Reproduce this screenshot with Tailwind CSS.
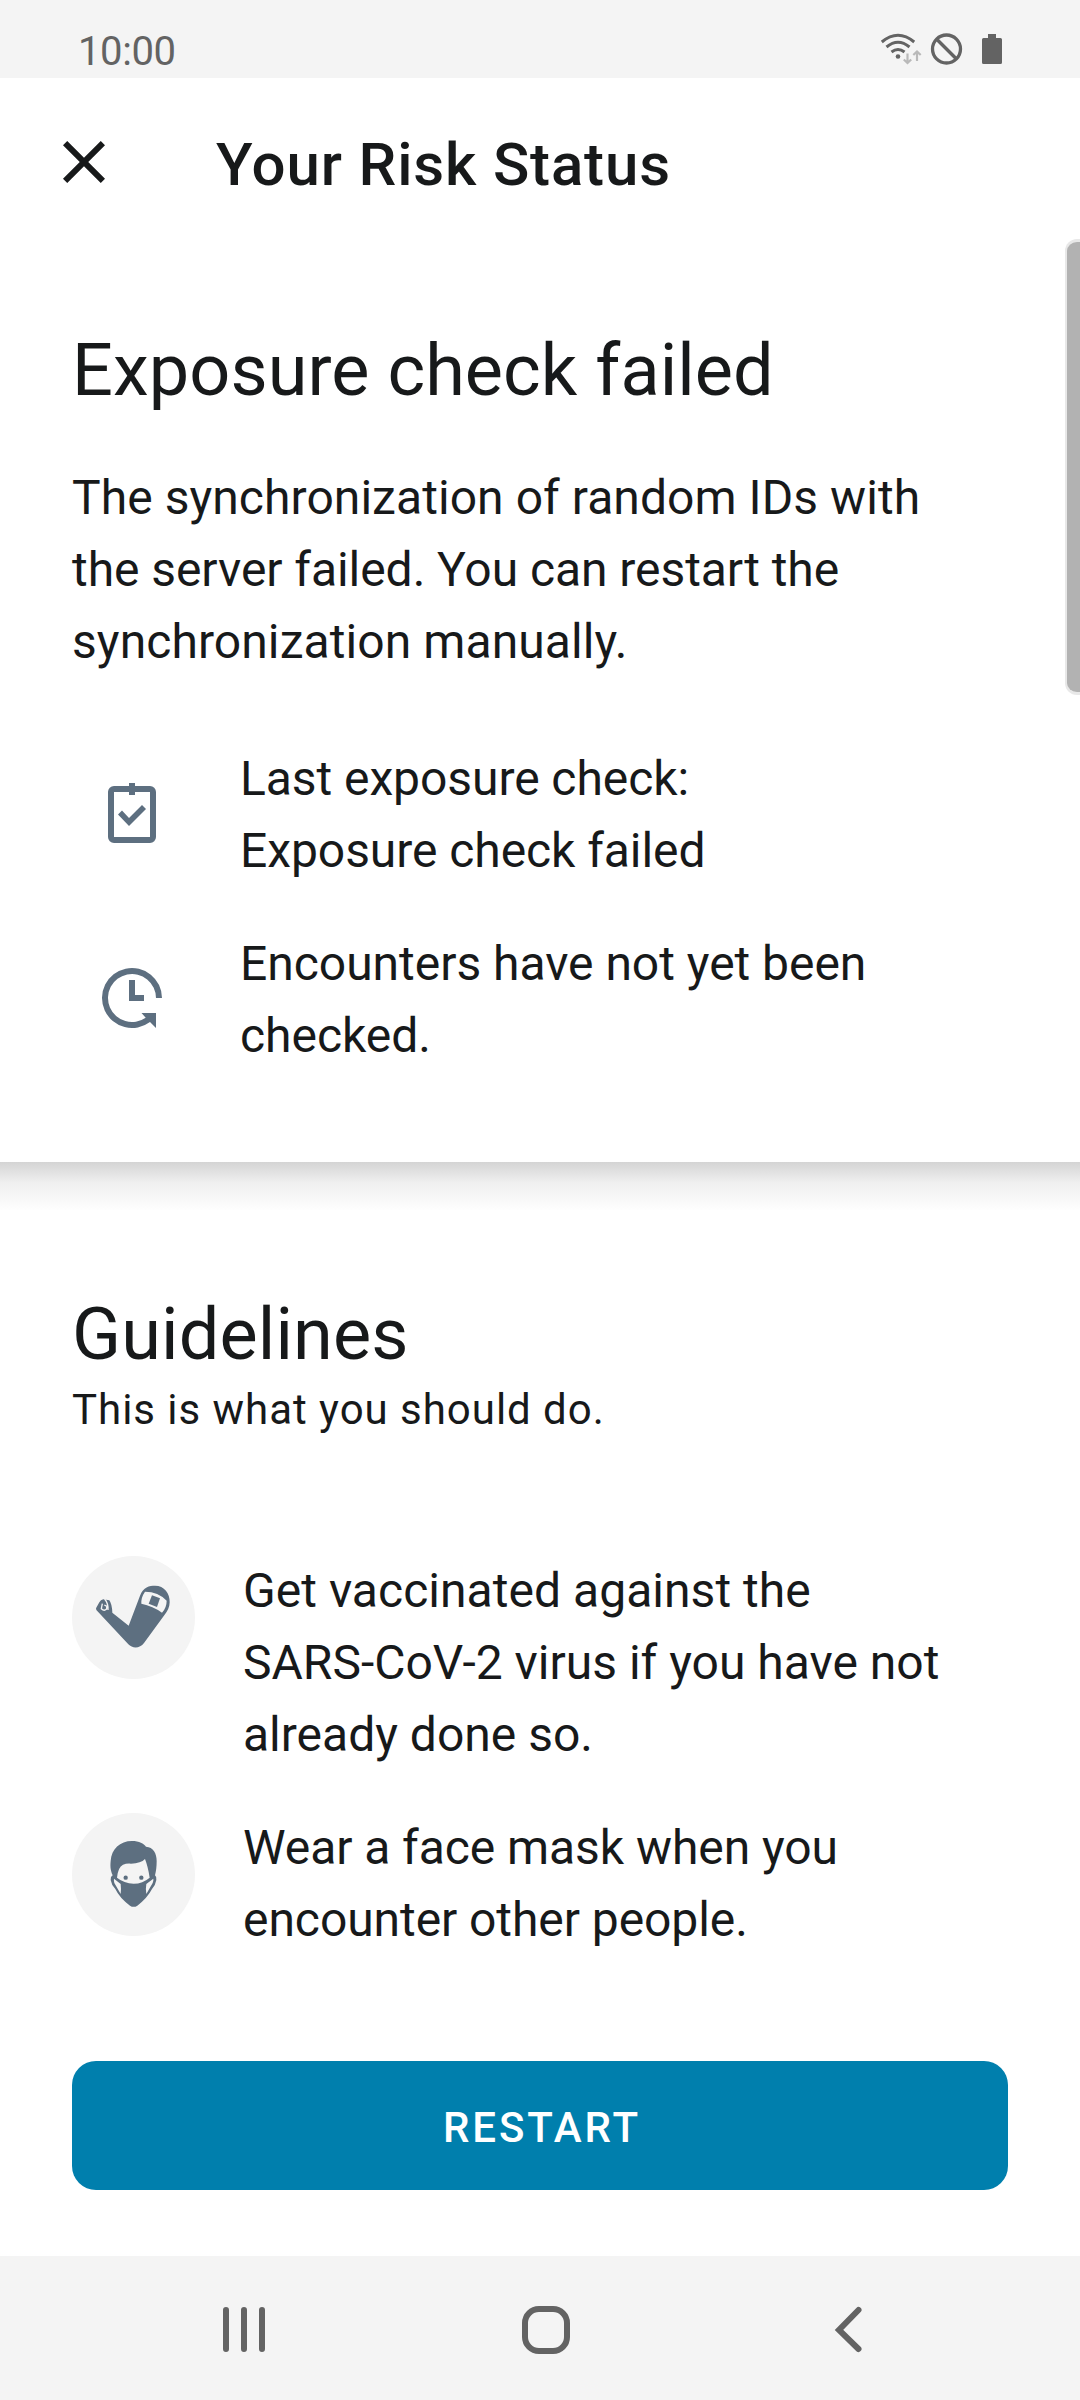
<!DOCTYPE html>
<html lang="en">
<head>
<meta charset="utf-8">
<title>Your Risk Status</title>
<script src="https://cdn.jsdelivr.net/npm/@tailwindcss/browser@4"></script>
</head>
<body class="h-[2400px] w-[1080px] overflow-hidden bg-white font-['Roboto',sans-serif] text-[48px] leading-[72px] text-[#17191a]">
<div class="relative flex h-full flex-col">
  <!-- Status bar -->
  <div class="flex h-[78px] shrink-0 items-start justify-between bg-[#f4f4f4] pr-[76px] pl-[78px]">
    <span class="mt-[28px] text-[40px] leading-[48px] tracking-[-0.4px] text-[#636363]">10:00</span>
    <svg class="mt-[30px] h-[36px] w-[124px]" viewBox="880 30 124 36" fill="none" stroke="#636363">
      <path d="M881.800 42Q898 28.500 914.200 42M886.500 47Q898 37.500 909.500 47M891.500 52Q898 47 904.500 52" stroke-width="3"/>
      <circle cx="898" cy="56.500" r="2.300" fill="#636363" stroke="none"/>
      <path d="M907.500 53.500v9M903.800 59.500l3.700 3.500 3.700-3.500M917 61v-9M913.300 55l3.700-3.500 3.700 3.500" stroke="#b9b9b9" stroke-width="2.200"/>
      <circle cx="946.500" cy="49" r="14" stroke-width="3.300"/>
      <path d="M936.500 39l20 20" stroke-width="3.300"/>
      <path d="M988 34h8v4h4.500a1.500 1.500 0 0 1 1.500 1.500v23a1.500 1.500 0 0 1-1.500 1.500h-17a1.500 1.500 0 0 1-1.500-1.500v-23a1.500 1.500 0 0 1 1.500-1.500h4.500z" fill="#636363" stroke="none"/>
    </svg>
  </div>

  <!-- Exposure check -->
  <section class="h-[1084px] shrink-0 px-[72px]">
    <header class="-ml-[24px] flex h-[168px] items-center">
      <svg class="size-[72px]" viewBox="0 0 24 24" fill="#17191a"><path d="M19 6.410L17.590 5 12 10.590 6.410 5 5 6.410 10.590 12 5 17.590 6.410 19 12 13.410 17.590 19 19 17.590 13.410 12z"/></svg>
      <h1 class="mt-[6px] ml-[96px] text-[60px] font-medium tracking-[0.85px]">Your Risk Status</h1>
    </header>
    <h2 class="mt-[77px] text-[72px] leading-[96px] tracking-[0.07px]">Exposure check failed</h2>
    <p class="mt-[43px]"><span class="tracking-[0.06px]">The synchronization of random IDs with</span><br><span class="tracking-[-0.06px]">the server failed. You can restart the</span><br><span class="tracking-[0.08px]">synchronization manually.</span></p>
    <div class="mt-[65px] flex items-center">
      <svg class="mt-[2px] ml-[24px] size-[72px]" viewBox="0 0 72 72" fill="#5d6f80">
        <path fill-rule="evenodd" d="M33 3h6v3h15a6 6 0 0 1 6 6v45a6 6 0 0 1-6 6H18a6 6 0 0 1-6-6V12a6 6 0 0 1 6-6h15zM18 12v45h36V12H39v3h-6v-3z"/>
        <path d="M22 34.500l4-4 7 7.500 13-13 4 4-17 17z"/>
      </svg>
      <p class="ml-[72px] tracking-[-0.07px]">Last exposure check:<br>Exposure check failed</p>
    </div>
    <div class="mt-[41px] flex items-center">
      <svg class="mb-[4px] ml-[24px] size-[72px]" viewBox="0 0 72 72" fill="#5d6f80">
        <path d="M66 36A30 30 0 1 0 54 60L60 66V51H45.500L49.700 55.700A24 24 0 1 1 60 36z"/>
        <path d="M33 18h6v15h9v6H33z"/>
      </svg>
      <p class="ml-[72px] tracking-[-0.03px]">Encounters have not yet been<br>checked.</p>
    </div>
  </section>

  <!-- Guidelines -->
  <div class="h-[48px] shrink-0 bg-linear-to-b from-[#d4d4d4] via-[#efefef] via-42% to-[#fefefe]"></div>
  <section class="grow px-[72px]">
    <h2 class="mt-[77px] text-[72px] leading-[96px] tracking-[0.15px]">Guidelines</h2>
    <p class="-mt-px text-[42px] leading-[56px] tracking-[0.97px]">This is what you should do.</p>
    <ul class="mt-[117px] flex flex-col gap-[41px]">
      <li class="flex items-start gap-[48px]">
        <svg class="mt-px size-[123px]" viewBox="36 48 369 369">
          <circle cx="220.500" cy="232.500" r="184.500" fill="#f4f4f4"/>
          <path fill="#5d6f80" d="M108 205L118 187Q122 180 130 178L148 181Q156 192 157 218L206 257L240 167C250 140 268 137 285 137C313 137 330 160 329 187C329 202 322 213 315 223L252 309C240 326 217 326 205 313L109 210Z"/>
          <path fill="#f4f4f4" d="M255 155Q295 155 320 182Q320 203 306 218Q279 198 244 191Q243 172 255 155Z"/>
          <path fill="#5d6f80" d="M276 166L300 175L291 201L266 191Z"/>
          <path fill="none" stroke="#f4f4f4" stroke-width="4" d="M127 191L124 206Q132 214 139 208L141 199L133 195M134 177Q145 190 144 210"/>
        </svg>
        <p><span class="tracking-[0.04px]">Get vaccinated against the</span><br>SARS-CoV-2 virus if you have not<br>already done so.</p>
      </li>
      <li class="flex items-start gap-[48px]">
        <svg class="mt-px size-[123px]" viewBox="36 39 369 369">
          <circle cx="220.500" cy="223.500" r="184.500" fill="#f4f4f4"/>
          <path fill="#5d6f80" d="M158 226C150 208 151 195 152 183C154 147 180 123 216 123C238 123 251 131 258 140C280 141 290 160 290 183C290 202 288 214 285 226Q291 231 289 240Q287 254 276 267Q262 294 232 317Q221 324 210 317Q179 294 166 267Q154 254 152 240Q151 230 158 226Z"/>
          <path fill="#f4f4f4" d="M171 233Q174 201 189 194Q199 190 213 191Q243 190 255 177Q264 200 269 233Q248 251 221 251Q192 250 171 233Z"/>
          <path fill="#f4f4f4" d="M162 236L182 252Q184 268 182 282Q174 268 163 249Q161 241 162 236ZM280 236L259 252Q256 268 259 282Q267 268 278 249Q281 241 280 236Z"/>
          <circle cx="197" cy="233" r="6.500" fill="#5d6f80"/>
          <circle cx="244" cy="233" r="6.500" fill="#5d6f80"/>
        </svg>
        <p class="tracking-[-0.07px]">Wear a face mask when you<br>encounter other people.</p>
      </li>
    </ul>
    <button class="mt-[105px] flex h-[129px] w-full items-center justify-center rounded-[24px] bg-[#007fad] pt-[4px] pl-[4px] text-[42px] font-medium tracking-[2.9px] text-white">RESTART</button>
  </section>

  <!-- Navigation bar -->
  <nav class="flex h-[144px] shrink-0 items-center bg-[#f4f4f4] pt-[4px]">
    <svg class="ml-[222px] h-[48px] w-[44px]" viewBox="222 2306 44 48" stroke="#636363" stroke-width="6" stroke-linecap="round"><path d="M226 2310v39M244 2310v39M262 2310v39"/></svg>
    <svg class="ml-[256px] size-[48px]" viewBox="0 0 48 48" fill="none" stroke="#636363" stroke-width="6"><rect x="3" y="3" width="42" height="42" rx="14"/></svg>
    <svg class="ml-[264px] h-[48px] w-[30px]" viewBox="834 2306 30 48" fill="none" stroke="#636363" stroke-width="6" stroke-linecap="round"><path d="M858.500 2310l-19.500 20 19.500 19"/></svg>
  </nav>

  <!-- Scroll thumb -->
  <div class="absolute top-[239px] right-0 h-[456px] w-[15px] rounded-l-[12px] border-y-[3px] border-l-2 border-[#e8e8e8] bg-[#b2b2b2]"></div>
</div>
</body>
</html>
